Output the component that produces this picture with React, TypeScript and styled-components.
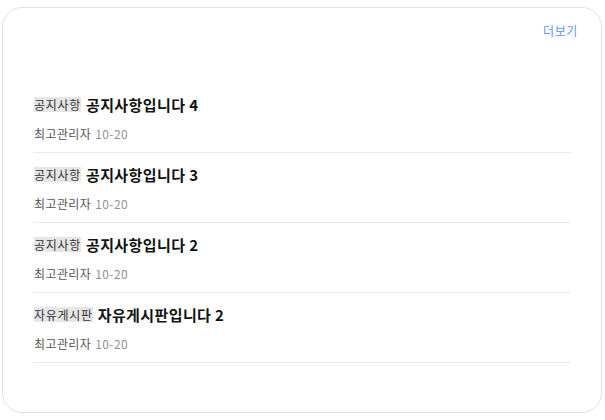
import React from "react";
import styled, { createGlobalStyle } from "styled-components";

const GlobalStyle = createGlobalStyle`
  html, body {
    margin: 0;
    padding: 0;
    background: #ffffff;
  }
  body {
    font-family: "Noto Sans CJK KR", "Noto Sans", sans-serif;
  }
`;

const Page = styled.div`
  padding: 7px 3px 0 2px;
`;

const Card = styled.div`
  box-sizing: border-box;
  width: 600px;
  height: 406px;
  border: 1px solid #e2e2e2;
  border-radius: 20px;
  background: #fff;
  padding: 15px 30px 0 30px;
`;

const Header = styled.div`
  display: flex;
  justify-content: flex-end;
  margin-right: -7px;
`;

const More = styled.a`
  font-size: 12px;
  line-height: 16px;
  letter-spacing: 0.6px;
  color: #5a97ff;
  text-decoration: none;
  cursor: pointer;
`;

const List = styled.ul`
  list-style: none;
  margin: 44px 0 0 0;
  padding: 0;
`;

const Row = styled.li`
  padding: 11px 0 9px 1px;
  border-bottom: 1px solid #e6eaea;
`;

const Title = styled.div`
  display: flex;
  align-items: center;
  gap: 5px;
  height: 20px;
`;

const Tag = styled.span`
  font-size: 12px;
  line-height: 15px;
  letter-spacing: 0.7px;
  color: #333;
  background: #e6e6e6;
`;

const Subject = styled.span`
  font-size: 15px;
  font-weight: 700;
  letter-spacing: 0.4px;
  color: #111;
`;

const Meta = styled.div`
  margin-top: 11px;
  font-size: 12px;
  line-height: 18px;
  letter-spacing: 0.4px;
  color: #555;
`;

const Date = styled.span`
  color: #939393;
  margin-left: 4px;
`;

const posts = [
  { tag: "공지사항", title: "공지사항입니다 4" },
  { tag: "공지사항", title: "공지사항입니다 3" },
  { tag: "공지사항", title: "공지사항입니다 2" },
  { tag: "자유게시판", title: "자유게시판입니다 2" },
];

export default function App() {
  return (
    <Page>
      <GlobalStyle />
      <Card>
        <Header>
          <More>더보기</More>
        </Header>
        <List>
          {posts.map((p, i) => (
            <Row key={i}>
              <Title>
                <Tag>{p.tag}</Tag>
                <Subject>{p.title}</Subject>
              </Title>
              <Meta>
                최고관리자<Date>10-20</Date>
              </Meta>
            </Row>
          ))}
        </List>
      </Card>
    </Page>
  );
}
